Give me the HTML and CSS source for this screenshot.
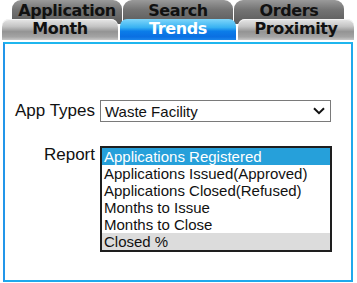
FILE: index.html
```html
<!DOCTYPE html>
<html>
<head>
<meta charset="utf-8">
<link rel="stylesheet" href="styles.css">
</head>
<body>
<div class="tabs">
  <div class="tab-row back">
    <div class="tab back-tab">Application</div>
    <div class="tab back-tab">Search</div>
    <div class="tab back-tab">Orders</div>
  </div>
  <div class="tab-row front">
    <div class="tab front-tab">Month</div>
    <div class="tab front-tab active">Trends</div>
    <div class="tab front-tab">Proximity</div>
  </div>
</div>
<div class="panel">
  <div class="form">
    <label class="label">App Types</label>
    <div class="select" role="combobox">
      <span>Waste Facility</span>
      <svg class="chevron" width="12" height="8" viewBox="0 0 12 8"><path d="M1 1.2 L6 6.2 L11 1.2" fill="none" stroke="#111" stroke-width="2"/></svg>
    </div>
    <label class="label report">Report</label>
    <div class="listbox" role="listbox">
      <div class="opt selected">Applications Registered</div>
      <div class="opt">Applications Issued(Approved)</div>
      <div class="opt">Applications Closed(Refused)</div>
      <div class="opt">Months to Issue</div>
      <div class="opt">Months to Close</div>
      <div class="opt hover">Closed %</div>
    </div>
  </div>
</div>
</body>
</html>
```
FILE: styles.css
```css
html, body {
  margin: 0;
  padding: 0;
  background: #fff;
}
body {
  width: 357px;
  height: 283px;
  overflow: hidden;
  font-family: "Liberation Sans", Arial, sans-serif;
}
.tabs {
  height: 42px;
}
.tab-row {
  display: flex;
}
.back {
  padding-left: 12px;
  gap: 1px;
  height: 24px;
}
.front {
  position: relative;
  margin-top: -5px;
  padding-left: 2px;
  gap: 2px;
  height: 21px;
}
.tab {
  font-family: "DejaVu Sans", sans-serif;
  font-weight: bold;
  font-size: 16px;
  letter-spacing: -0.4px;
  text-align: center;
  color: #111;
  box-sizing: border-box;
}
.back-tab {
  width: 110px;
  height: 24px;
  padding-top: 4px;
  line-height: 14px;
  border-radius: 9px 9px 0 0;
  background: linear-gradient(#9a9a9a 0%, #747474 40%, #5a5a5a 100%);
}
.front-tab {
  width: 116px;
  height: 21px;
  line-height: 19px;
  border-radius: 7px 7px 0 0;
  background: linear-gradient(#e8e8e8 0%, #c4c4c4 35%, #949494 60%, #a4a4a4 85%, #c8c8c8 100%);
  box-shadow: inset 0 1px 0 #f4f4f4;
}
.front-tab.active {
  color: #fff;
  background: linear-gradient(#7fd6fa 0%, #38b2f2 40%, #0b7de9 58%, #0a6fe2 85%, #1a86ec 100%);
  box-shadow: none;
}
.panel {
  margin: 0 4px 0 3px;
  height: 240px;
  box-sizing: border-box;
  border: 2px solid #1fa9ec;
  border-left-color: #2396e9;
  border-top-color: #1fb6ee;
}
.form {
  display: grid;
  grid-template-columns: 90px 232px;
  column-gap: 5px;
  row-gap: 24px;
  padding-top: 56px;
}
.label {
  font-size: 17px;
  color: #111;
  justify-self: end;
  align-self: center;
}
.label.report {
  align-self: start;
  margin-top: -1px;
}
.select {
  width: 231px;
  height: 22px;
  box-sizing: border-box;
  border: 1px solid #7a7a7a;
  display: flex;
  align-items: center;
  justify-content: space-between;
  padding: 0 5px 0 4px;
  font-size: 15px;
  color: #111;
}
.chevron {
  display: block;
}
.listbox {
  width: 232px;
  box-sizing: border-box;
  border: 2px solid #1e1e1e;
  font-size: 15px;
  color: #111;
}
.opt {
  height: 17px;
  line-height: 17px;
  padding-left: 2px;
  white-space: nowrap;
}
.opt.selected {
  background: #26a0da;
  color: #fff;
}
.opt.hover {
  background: #dcdcdc;
}
```
